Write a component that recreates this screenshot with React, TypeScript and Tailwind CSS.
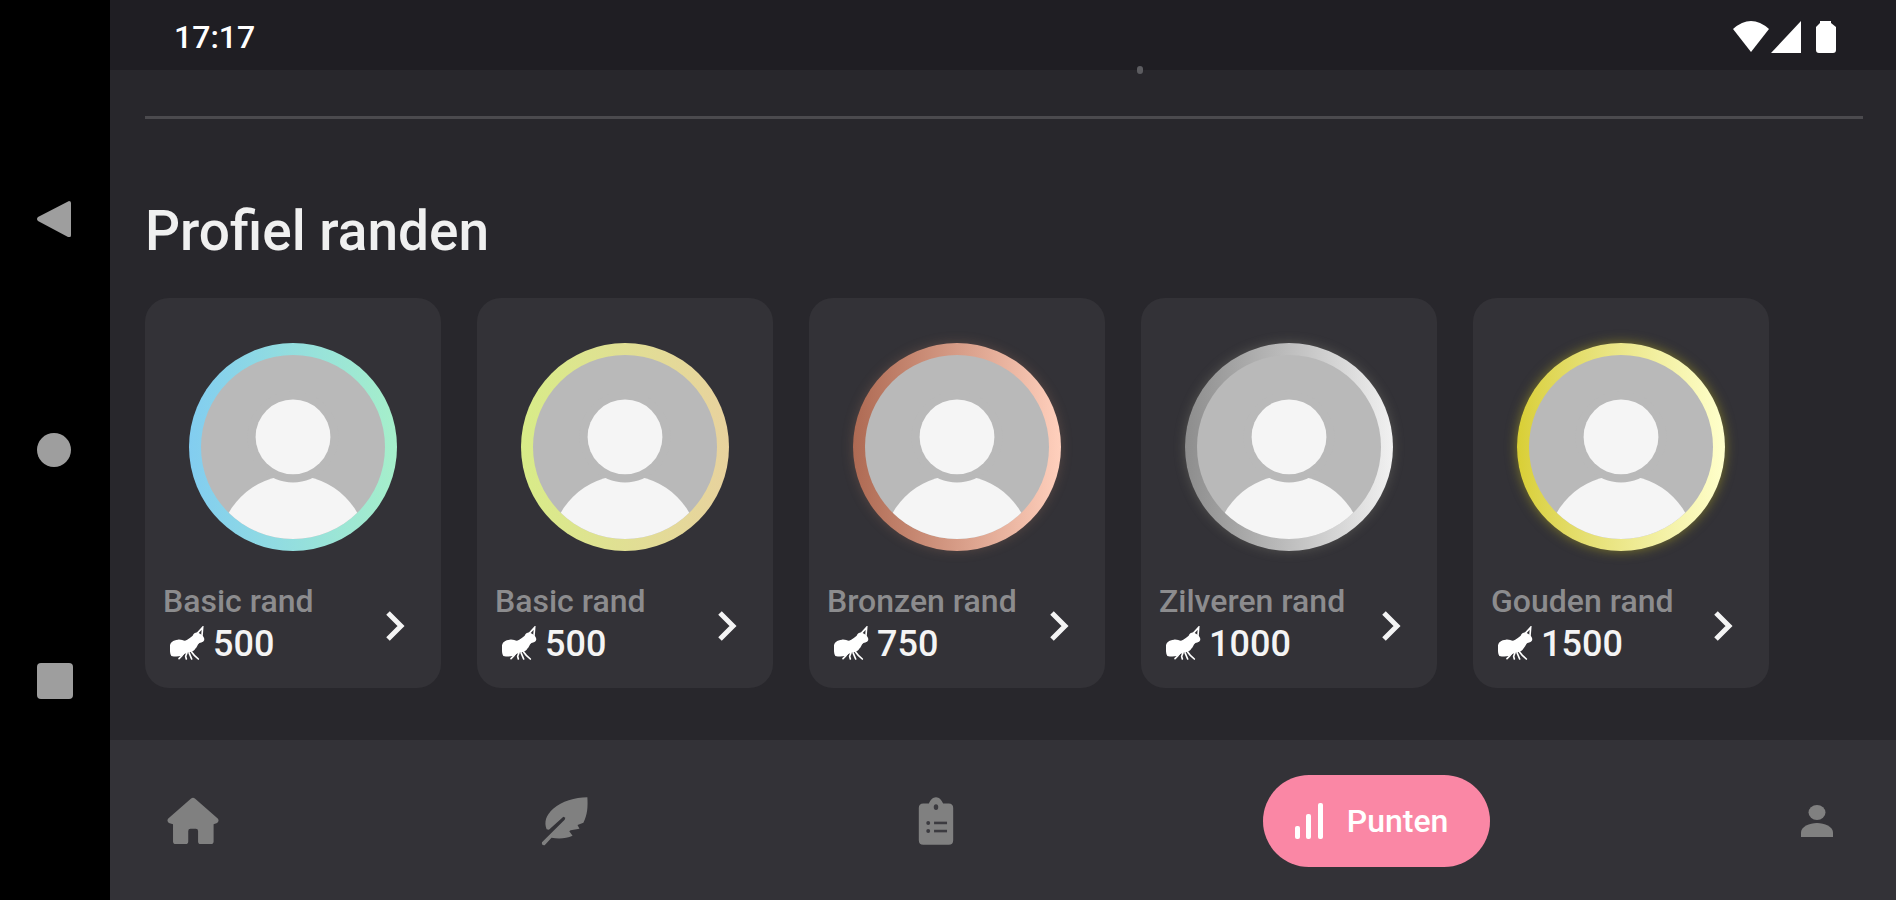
import type { ReactNode } from "react";

interface Border {
  id: number;
  name: string;
  price: number;
  ring: string;
}

const borders: Border[] = [
  {
    id: 1,
    name: "Basic rand",
    price: 500,
    ring: "from-[#82cdf0] to-[#a6efca]",
  },
  {
    id: 2,
    name: "Basic rand",
    price: 500,
    ring: "from-[#d8ec88] to-[#e8d29e]",
  },
  {
    id: 3,
    name: "Bronzen rand",
    price: 750,
    ring: "from-[#ae6a53] to-[#ffd0bd] shadow-[0_0_12px_#a8786450]",
  },
  {
    id: 4,
    name: "Zilveren rand",
    price: 1000,
    ring: "from-[#8d8d8d] to-[#f1f1f1] shadow-[0_0_12px_#a0a08c50]",
  },
  {
    id: 5,
    name: "Gouden rand",
    price: 1500,
    ring: "from-[#d9cf33] to-[#ffffcb] shadow-[0_0_12px_#c8be1e80]",
  },
];

const AvatarIcon = () => (
  <svg viewBox="0 0 182 182" className="w-full rounded-full" aria-hidden="true">
    <rect width="182" height="182" fill="#b9b9b9" />
    <circle cx="91" cy="192" r="73" fill="#f5f5f5" />
    <circle cx="91" cy="81" r="45" fill="#b9b9b9" />
    <circle cx="91" cy="81" r="37" fill="#f5f5f5" />
  </svg>
);

const AntIcon = () => (
  <svg viewBox="0 0 108 108" className="size-9" fill="#fff" aria-hidden="true">
    <path d="M3 62C2 50 12 42 27 41C36 40 42 44 48 44C58 40 63 35 71 29C74 23 79 19 86 20C93 22 103 28 105 36C108 43 103 49 94 50C86 52 86 61 80 67C76 75 68 79 58 79L46 84C38 92 22 93 7 90C2 82 3 72 3 62Z" />
    <g stroke="#fff" strokeWidth="5" fill="none" strokeLinecap="round">
      <path d="M84 23L101 4L99 28" />
      <path d="M44 82L38 90L30 98M54 80L50 91L52 99M66 76L76 88L88 99M60 80L68 99" />
    </g>
  </svg>
);

const ChevronIcon = () => (
  <svg
    viewBox="0 0 20 32"
    className="mt-2 w-5"
    fill="none"
    stroke="#f4f4f4"
    strokeWidth="5"
    aria-hidden="true"
  >
    <path d="M3 3L16 16L3 29" />
  </svg>
);

const HomeIcon = () => (
  <svg viewBox="168 198 164 150" className="w-13" fill="#808080" aria-hidden="true">
    <path d="M244 203Q250 198 256 203L328 266Q334 274 326 280L315 284V338Q315 346 306 346H274Q266 346 266 338V305Q266 298 259 298H242Q235 298 235 305V338Q235 346 226 346H196Q187 346 187 338V284L174 280Q166 274 172 266Z" />
  </svg>
);

const FeatherIcon = () => (
  <svg viewBox="1290 198 146 152" className="w-12" fill="#808080" aria-hidden="true">
    <path d="M1431 202C1393 203 1353 214 1328 236C1304 257 1299 278 1307 299L1314 301L1358 261L1364 264L1362 270L1293 339Q1291 349 1301 348L1322 325C1346 329 1367 327 1386 319L1376 305L1380 302L1407 298L1401 286L1419 279C1431 257 1433 230 1431 202Z" />
  </svg>
);

const ClipboardIcon = () => (
  <svg viewBox="114 170 108 148" className="h-12 w-9" aria-hidden="true">
    <path
      fill="#808080"
      d="M129 190H146C151 180 158 171 168 171S185 180 190 190H207Q221 190 221 204V303Q221 317 207 317H129Q115 317 115 303V204Q115 190 129 190Z"
    />
    <g fill="#3c3b40">
      <ellipse cx="168" cy="201" rx="7" ry="9" />
      <circle cx="144" cy="250" r="6" />
      <circle cx="144" cy="275" r="6" />
      <rect x="162" y="246" width="40" height="8" />
      <rect x="162" y="271" width="40" height="8" />
    </g>
  </svg>
);

const PersonIcon = () => (
  <svg viewBox="0 0 34 34" className="w-8" fill="#808080" aria-hidden="true">
    <ellipse cx="17" cy="8" rx="9" ry="8" />
    <path d="M0 34V29C0 23 9 19 17 19S34 23 34 29V34Z" />
  </svg>
);

const BarsIcon = () => (
  <svg viewBox="0 0 28 36" className="w-7" fill="#fff" aria-hidden="true">
    <rect x="0" y="23" width="5" height="13" rx="2" />
    <rect x="11" y="11" width="5" height="25" rx="2" />
    <rect x="23" y="0" width="5" height="36" rx="2" />
  </svg>
);

const SystemBar = () => (
  <aside className="flex w-[110px] shrink-0 flex-col items-center justify-center gap-[195px] bg-black">
    <button type="button" aria-label="Terug">
      <svg viewBox="0 0 36 36" className="size-9" fill="#9e9e9e">
        <path d="M32 0Q34 0 34 2V34Q34 37 31 36L1 20Q-1 18 1 16Z" />
      </svg>
    </button>
    <button type="button" aria-label="Start">
      <svg viewBox="0 0 36 36" className="size-9" fill="#9e9e9e">
        <circle cx="17" cy="18" r="17" />
      </svg>
    </button>
    <button type="button" aria-label="Overzicht">
      <svg viewBox="0 0 36 36" className="size-9" fill="#9e9e9e">
        <rect width="36" height="36" rx="4" />
      </svg>
    </button>
  </aside>
);

const StatusBar = () => (
  <header className="relative flex h-[70px] shrink-0 items-center justify-between bg-[#1f1e23] pt-1 pr-[60px] pl-16 text-[32px] font-medium text-white">
    <span>17:17</span>
    <svg viewBox="0 0 104 34" className="w-26" fill="#fff" aria-hidden="true">
      <path d="M1 9Q19 -7 37 9L19 32Z" />
      <path d="M69 1V33H39Z" />
      <path d="M88 1H99V3L104 7V30Q104 33 101 33H87Q84 33 84 30V7L88 3Z" />
    </svg>
    <span className="absolute right-[753px] -bottom-1 h-2 w-1.5 rounded-full bg-[#5c5c60]" />
  </header>
);

const BorderCard = ({ border }: { border: Border }) => (
  <button
    type="button"
    className="flex w-[296px] shrink-0 flex-col rounded-3xl bg-[#333237] px-[18px] pt-[45px] pb-[23px] text-left"
  >
    <div className={`size-52 self-center rounded-full bg-linear-to-r p-3 ${border.ring}`}>
      <AvatarIcon />
    </div>
    <div className="mt-7 flex w-full items-center justify-between pr-[18px]">
      <div>
        <p className="text-[32px] leading-[44px] font-medium text-[#8c8c8e]">{border.name}</p>
        <p className="flex items-center gap-2 pl-1.5 text-[36px] leading-[42px] font-medium text-[#f4f4f4]">
          <AntIcon />
          {border.price}
        </p>
      </div>
      <ChevronIcon />
    </div>
  </button>
);

const NavItem = ({ label, children }: { label: string; children: ReactNode }) => (
  <a href="#" aria-label={label} className="flex w-[90px] justify-center">
    {children}
  </a>
);

const BottomNav = () => (
  <nav className="flex h-40 shrink-0 items-center justify-between bg-[#333237] pt-0.5 pr-[34px] pl-[38px]">
    <NavItem label="Home">
      <HomeIcon />
    </NavItem>
    <NavItem label="Natuur">
      <FeatherIcon />
    </NavItem>
    <NavItem label="Taken">
      <ClipboardIcon />
    </NavItem>
    <a
      href="#"
      aria-current="page"
      className="flex h-[92px] items-center gap-6 rounded-full bg-[#fa87a5] pr-[42px] pl-8 text-[32px] font-medium text-white"
    >
      <BarsIcon />
      Punten
    </a>
    <NavItem label="Profiel">
      <PersonIcon />
    </NavItem>
  </nav>
);

export default function App() {
  return (
    <div className="flex min-h-screen bg-[#28272c] font-['Roboto',sans-serif]">
      <SystemBar />
      <div className="flex min-w-0 flex-1 flex-col">
        <StatusBar />
        <main className="flex-1 overflow-hidden pt-[46px] pr-[33px] pl-[35px]">
          <hr className="border-t-3 border-[#4b4a4e]" />
          <h1 className="mt-20 text-[55px] leading-16 font-medium text-[#f0f0f0]">
            Profiel randen
          </h1>
          <div className="mt-[35px] flex gap-9">
            {borders.map((border) => (
              <BorderCard key={border.id} border={border} />
            ))}
          </div>
        </main>
        <BottomNav />
      </div>
    </div>
  );
}
